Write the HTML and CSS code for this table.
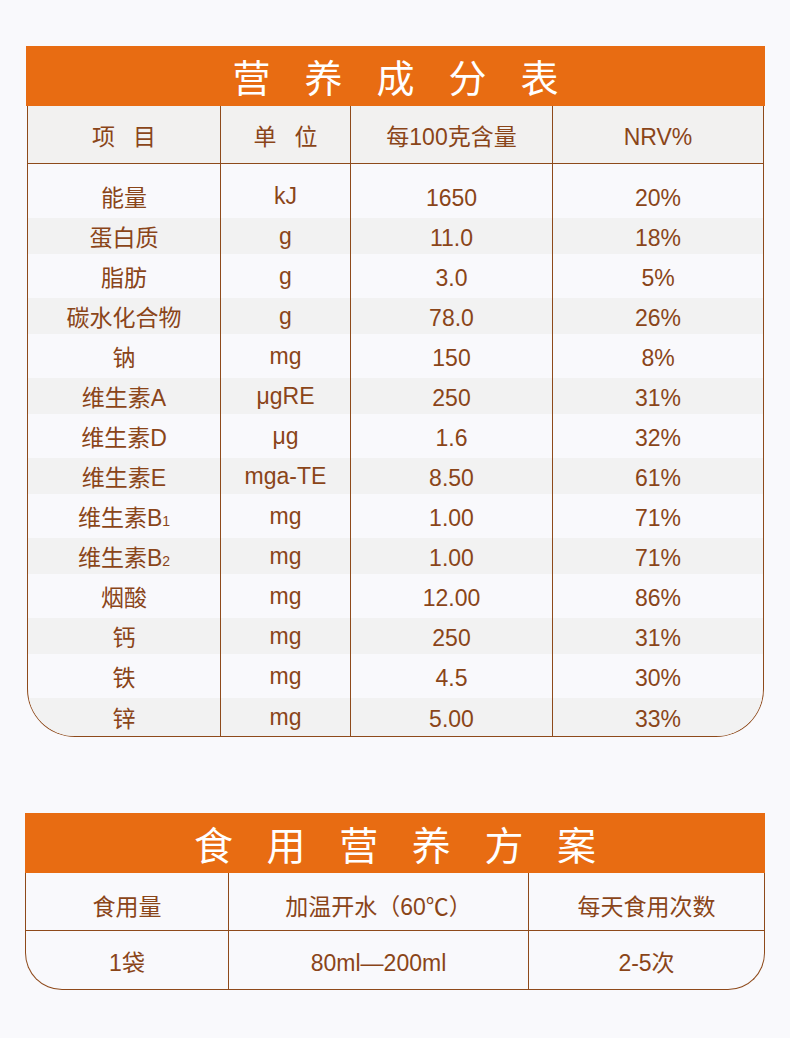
FILE: index.html
```html
<!DOCTYPE html>
<html lang="zh-CN">
<head>
<meta charset="utf-8">
<title>营养成分表</title>
<link rel="stylesheet" href="styles.css">
</head>
<body>
<section class="card nutrition">
  <div class="banner banner-nutrition">营养成分表</div>
  <div class="panel panel-nutrition">
    <div class="row head">
      <div class="cell"><span class="spaced">项目</span></div>
      <div class="cell"><span class="spaced">单位</span></div>
      <div class="cell">每100克含量</div>
      <div class="cell">NRV%</div>
    </div>
    <div class="row d first">
      <div class="cell">能量</div><div class="cell unit">kJ</div><div class="cell">1650</div><div class="cell">20%</div>
    </div>
    <div class="row d alt">
      <div class="cell">蛋白质</div><div class="cell unit">g</div><div class="cell">11.0</div><div class="cell">18%</div>
    </div>
    <div class="row d">
      <div class="cell">脂肪</div><div class="cell unit">g</div><div class="cell">3.0</div><div class="cell">5%</div>
    </div>
    <div class="row d alt">
      <div class="cell">碳水化合物</div><div class="cell unit">g</div><div class="cell">78.0</div><div class="cell">26%</div>
    </div>
    <div class="row d">
      <div class="cell">钠</div><div class="cell unit">mg</div><div class="cell">150</div><div class="cell">8%</div>
    </div>
    <div class="row d alt">
      <div class="cell">维生素A</div><div class="cell unit">μgRE</div><div class="cell">250</div><div class="cell">31%</div>
    </div>
    <div class="row d">
      <div class="cell">维生素D</div><div class="cell unit">μg</div><div class="cell">1.6</div><div class="cell">32%</div>
    </div>
    <div class="row d alt">
      <div class="cell">维生素E</div><div class="cell unit">mga-TE</div><div class="cell">8.50</div><div class="cell">61%</div>
    </div>
    <div class="row d">
      <div class="cell">维生素B<span class="sub">1</span></div><div class="cell unit">mg</div><div class="cell">1.00</div><div class="cell">71%</div>
    </div>
    <div class="row d alt">
      <div class="cell">维生素B<span class="sub">2</span></div><div class="cell unit">mg</div><div class="cell">1.00</div><div class="cell">71%</div>
    </div>
    <div class="row d">
      <div class="cell">烟酸</div><div class="cell unit">mg</div><div class="cell">12.00</div><div class="cell">86%</div>
    </div>
    <div class="row d alt">
      <div class="cell">钙</div><div class="cell unit">mg</div><div class="cell">250</div><div class="cell">31%</div>
    </div>
    <div class="row d">
      <div class="cell">铁</div><div class="cell unit">mg</div><div class="cell">4.5</div><div class="cell">30%</div>
    </div>
    <div class="row d alt last">
      <div class="cell">锌</div><div class="cell unit">mg</div><div class="cell">5.00</div><div class="cell">33%</div>
    </div>
  </div>
</section>

<section class="card usage">
  <div class="banner banner-usage">食用营养方案</div>
  <div class="panel panel-usage">
    <div class="urow uhead">
      <div class="cell">食用量</div>
      <div class="cell">加温开水（60℃）</div>
      <div class="cell">每天食用次数</div>
    </div>
    <div class="urow udata">
      <div class="cell">1袋</div>
      <div class="cell">80ml—200ml</div>
      <div class="cell">2-5次</div>
    </div>
  </div>
</section>
</body>
</html>
```

FILE: styles.css
```css
html, body {
  margin: 0;
  padding: 0;
}

body {
  background: #f9f9fc;
  font-family: "Liberation Sans", "Noto Sans CJK SC", sans-serif;
  font-weight: 400;
  color: #8a4519;
  width: 790px;
  height: 1038px;
  overflow: hidden;
}

.card {
  box-sizing: border-box;
}

.nutrition {
  margin-top: 46px;
  margin-left: 26px;
  width: 739px;
}

.usage {
  margin-top: 76px;
  margin-left: 25px;
  width: 740px;
}

.banner {
  height: 60px;
  background: #e86c12;
  color: #ffffff;
  display: flex;
  align-items: center;
  justify-content: center;
  font-family: "Noto Sans CJK SC", sans-serif;
  font-weight: 400;
  line-height: 1;
}

.banner-nutrition {
  font-size: 38px;
  letter-spacing: 34px;
  padding-left: 34px;
}

.banner-usage {
  font-size: 39px;
  letter-spacing: 33.6px;
  padding-left: 33.6px;
}

.panel {
  border: 1px solid #8e4a1b;
  border-top: none;
  overflow: hidden;
}

.panel-nutrition {
  margin: 0 1px;
  border-radius: 0 0 48px 48px;
}

.panel-usage {
  border-radius: 0 0 37px 37px;
}

.row {
  display: grid;
  grid-template-columns: 192px 130px 202px 1fr;
}

.urow {
  display: grid;
  grid-template-columns: 202px 300px 1fr;
}

.cell {
  display: flex;
  align-items: center;
  justify-content: center;
  white-space: nowrap;
  line-height: 1.15;
}

.cell + .cell {
  border-left: 1px solid #8e4a1b;
}

.head {
  height: 57px;
  background: #f2f1f0;
  border-bottom: 1px solid #8e4a1b;
  font-size: 23px;
}

.head .cell {
  padding-top: 6px;
}

.spaced {
  letter-spacing: 18px;
  margin-right: -18px;
}

.d {
  height: 44px;
  font-size: 23px;
}

.d .cell {
  box-sizing: border-box;
  padding-top: 5px;
}

.d .unit {
  padding-top: 1px;
}

.d.alt {
  height: 36px;
  background: #f2f2f2;
}

.d.first {
  height: 54px;
}

.d.first .cell {
  padding-top: 15px;
}

.d.first .unit {
  padding-top: 11px;
}

.d.last {
  height: 38px;
}

.sub {
  font-size: 14px;
  position: relative;
  top: 3px;
}

.uhead {
  height: 57px;
  border-bottom: 1px solid #8e4a1b;
  font-size: 23px;
}

.uhead .cell {
  box-sizing: border-box;
  padding-top: 11px;
}

.udata {
  height: 58px;
  font-size: 23px;
}

.udata .cell {
  box-sizing: border-box;
  padding-top: 6px;
}
```
